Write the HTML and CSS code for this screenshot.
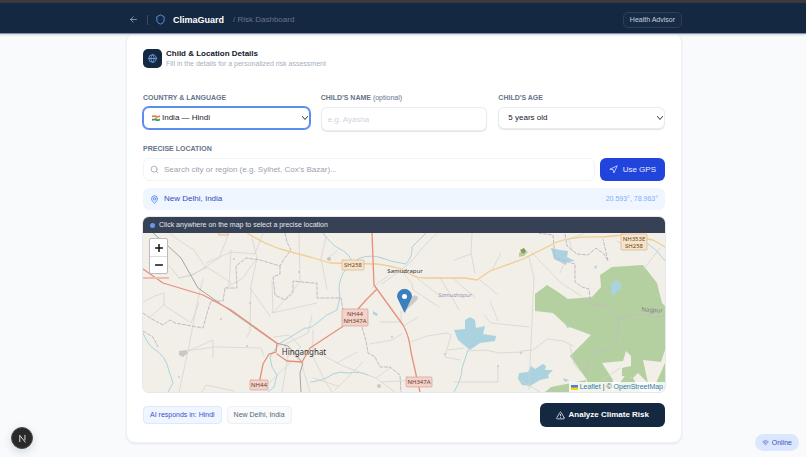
FILE: index.html
```html
<!doctype html>
<html lang="en">
<head>
  <meta charset="utf-8">
  <title>ClimaGuard - Risk Dashboard</title>
  <link rel="stylesheet" href="styles.css">
</head>
<body>
<header class="topbar">
  <a class="back" href="#" aria-label="Back"><svg viewBox="0 0 24 24"><path d="M20 12H4M11 5l-7 7 7 7"/></svg></a>
  <span class="divider"></span>
  <svg class="shield" viewBox="0 0 24 24"><path d="M20 13c0 5-3.500 7.500-7.700 8.900a1 1 0 0 1-.6 0C7.500 20.500 4 18 4 13V6a1 1 0 0 1 1-1c2 0 4.500-1.200 6.200-2.700a1.200 1.200 0 0 1 1.600 0C14.500 3.800 17 5 19 5a1 1 0 0 1 1 1z"/></svg>
  <strong class="brand">ClimaGuard</strong>
  <span class="crumb">/ Risk Dashboard</span>
  <button class="advisor" type="button">Health Advisor</button>
</header>

<main class="page">
  <form class="card">
    <div class="heading">
      <span class="heading-icon"><svg viewBox="0 0 24 24"><circle cx="12" cy="12" r="10"/><path d="M2 12h20M12 2c-5.500 5.500-5.500 14.500 0 20M12 2c5.500 5.500 5.500 14.500 0 20"/></svg></span>
      <div>
        <h1>Child &amp; Location Details</h1>
        <p>Fill in the details for a personalized risk assessment</p>
      </div>
    </div>

    <div class="fields">
      <div class="field">
        <label for="country">COUNTRY &amp; LANGUAGE</label>
        <div class="select-box">
          <select id="country" class="control with-flag focused"><option>India — Hindi</option></select>
          <svg class="flag" viewBox="0 0 8 6"><path fill="#e8804a" d="M0 .6q2-.8 4 0t4-.3v2q-2 .9-4 .2t-4 .1z"/><path fill="#f3f1ea" d="M0 2.400q2-.6 4 0t4-.3v1.600q-2 .9-4 .2t-4 .1z"/><path fill="#3c9659" d="M0 4q2-.6 4 0t4-.3v1.800q-2 .9-4 .2t-4 .1z"/><circle cx="4" cy="3.200" r=".7" fill="#53629c"/></svg>
          <svg class="chevron" viewBox="0 0 8 8"><path d="M1.500 2.500L4 5.500l2.500-3"/></svg>
        </div>
      </div>
      <div class="field">
        <label for="name">CHILD'S NAME <span>(optional)</span></label>
        <input id="name" class="control name" type="text" placeholder="e.g. Ayasha">
      </div>
      <div class="field">
        <label for="age">CHILD'S AGE</label>
        <div class="select-box">
          <select id="age" class="control"><option>5 years old</option></select>
          <svg class="chevron" viewBox="0 0 8 8"><path d="M1.500 2.500L4 5.500l2.500-3"/></svg>
        </div>
      </div>
    </div>

    <div class="field location">
      <label for="search">PRECISE LOCATION</label>
      <div class="search-row">
        <div class="search">
          <svg viewBox="0 0 24 24"><circle cx="11" cy="11" r="8"/><path d="M21 21l-4.300-4.300"/></svg>
          <input id="search" type="text" placeholder="Search city or region (e.g. Sylhet, Cox's Bazar)...">
        </div>
        <button class="gps" type="button"><svg viewBox="0 0 24 24"><path d="M3 11l19-9-9 19-2-8z"/></svg>Use GPS</button>
      </div>
    </div>

    <div class="place">
      <svg viewBox="0 0 24 24"><path d="M20 10c0 5-5.500 10.200-7.400 11.800a1 1 0 0 1-1.200 0C9.500 20.200 4 15 4 10a8 8 0 0 1 16 0"/><circle cx="12" cy="10" r="3"/></svg>
      <span>New Delhi, India</span>
      <span class="coords">20.593°, 78.963°</span>
    </div>

    <div class="map">
      <div class="map-bar"><i></i>Click anywhere on the map to select a precise location</div>
      <div class="map-view">
        <svg class="tiles" viewBox="143 233 522 159" preserveAspectRatio="xMidYMid slice">
          <rect x="143" y="233" width="522" height="159" fill="#f2efe9"/>
          <!-- forest -->
          <g fill="#b5d0a0">
            <path d="M535 311V294L547 285 558 292 568 299 592 297 601 287 600 275 612 267 643 265 657 283 662 303 665 306V350L661 362 643 360 648 383 638 373 633 378 622 376 622 368 631 366 631 356 626 351 623 361 602 363 613 380 613 392H586L587 380 570 356 591 335 567 326 553 313z"/>
            <path d="M545 392l6-5 15-3 20-4v12zM665 363l-9 20 9 9zM613 392l12-16 8 2 8 14z"/>
            <path d="M519 253l5-4 4 3-4 4-5 1z"/>
          </g>
          <!-- lakes -->
          <g fill="#aad3df">
            <path d="M470 317l5 3 1 8 9-2-2 8 13 2-1 5-15 2-10 7-12-10-4-10 11-1v-9z"/>
            <path d="M519 373l9-1 3-6 4 3 8-5 3 2-1 4 8 0-5 5 1 3-9 2-10 6-8-1-4-6z"/>
            <path d="M551 248l9 2 8 1-1 6 8 4-8 1-1 3-8-4-4-2z"/>
            <path d="M611 284l5-4 5 3v6l-5 3-2 4-3-3zM594 267l3-2-1 4zM373 311l5 3-1 2-4-2zM566 325l5 2-4 1zM563 378l6 2-4 2zM655 294h2v2z"/>
          </g>
          <!-- rivers -->
          <g class="river">
            <path d="M323 233q9 12 15 15 13 6 14 15l-9 10q-6 13-3 23l-3 14q-11 4-20 13-7 6-12 5-13 8-26 16l-9 13 2 10 5 8-3 12-6 5"/>
            <path d="M426 233q-7 7-14 14 1 9-6 17-15-2-27-7-15-3-24 4M143 333q5 12 11 16 12 7 15 22l4 12-5 9M311 382q12-1 22-8 7-3 15-1 12-2 20 2M454 392q8-13 8-24l6-18M648 244l9 7 8 10"/>
          </g>
          <!-- minor roads -->
          <g class="minor">
            <path d="M169 233l8 6 17 11 12 18-15 7-12 3-6-8-8-8-10-7M179 278l14-3 26-17 10-25M206 267l12 7 13 9M206 263l25-11 24 2 8-21M203 279l-5 20-10 52-9 41M231 250l-2 35M252 238l3 12 2 8-6 28-1 45M257 258l-14 20-18 10M143 302l12-6 9-3v12l-14 12M164 305l27 18 8-20M183 353l30-13v18M185 351l30-4 46 1 3 8M250 288l20 28M299 233l1 49-27 31-1-31M272 313l45-10M250 331l-3 6M202 392l4-7 28 6M312 315l-4 18-24 12 17 17 9 30M274 337l15-2 12 12-12 9M288 356l-6 36M291 362l-25 24M311 353l12 24 9 15"/>
            <path d="M326 237l-5 22 6 30M327 259l10-8M378 257l5 2M382 284l29-22 12-15 14-14M372 288l17-13M400 268l12 16 1 6 14 9 12 8M417 278l14 11 10 8M440 278l10 16 9 16M453 278l12 11 10 8M472 233l-1 20 4 20M454 260l17-6M480 280l17 14M492 270l9-17M401 311v11M400 322h-20M405 325l13-8M402 334l-10 6-22 4M411 342l16-6 20-3 4 2-6 22 15 3M467 351l18-1 15 3M313 330v20l30 16 33 12 27 20M337 363l20-11M335 390l28-28M376 378l14-10M448 350l16-2M484 315l7 8 20 2 18 2M529 257l5 20-5 112M490 301l8 20M500 353l23-1M498 366v16h-44M418 380l-36 2M531 252l14 14 15 16 21 14M560 273l5-11M521 351l12-1 14-11 16 2 10 5M570 346l4 18 6 7M583 234l-14 5 3 12M640 238l-15 8-8-5M660 248l-17 22M602 380l18-12M520 380l20 12M313 378l25 8"/>
          </g>
          <g fill="#cbc7c2"><path d="M179 351l7-1 2 3-5 4-4-2z"/><circle cx="234" cy="259" r="1"/><circle cx="299" cy="272" r="1"/><circle cx="250" cy="303" r="1"/><circle cx="247" cy="346" r="1"/><circle cx="221" cy="319" r="1"/><circle cx="179" cy="377" r="1"/><circle cx="329" cy="259" r="2"/><circle cx="392" cy="337" r="1"/><circle cx="445" cy="354" r="1"/><circle cx="498" cy="366" r="1"/><circle cx="521" cy="353" r="1"/><circle cx="379" cy="386" r="2"/></g>
          <!-- district borders -->
          <g class="border">
            <path d="M143 313l7 5 13 7 7-5 5 3 28 5 5-18 3-9h12l2-13h12l-1-22 10-8 14 2 20 6 4-7 7-9-4-8-2-9M280 266v8l-7 3 2 18 10 5 8-7v-12l20 2h4v15h24l2 13M143 331l10 6 5 10"/>
            <path d="M362 327l4 14 2 12 7 4 5 10h10l10 8 1 17M538 233l15 2 2 23 20 6v18l7 5 7 2 2 17 10-2 10 5 7 8 1 12-4 15-7 6-10 2-10 10-3 14M618 319l22-5 13 3 12-1M565 234l2 12 10 8 11 1 8-7 8 6 4 7-5-22"/>
          </g>
          <!-- railway -->
          <path class="rail" d="M153 233l14 12 14 13 17 30 78 55 12 3 15 17-3 10 1 19"/>
          <!-- highways -->
          <path class="yellow" d="M247 233q16 10 33 16l30 8 20 6 47 1q16 2 26 6 12 8 20 8h42l12 2 13-9 33-12 34-17q16-6 46-5l20-2 30 5 12 7"/>
          <path class="red" d="M143 269l20 14 40 12 28 15 43 31 3 2-1 9-7 2-6 10-4 20M277 354l10 7 15 1 8-14 32-21 24-27 11-11M372 233l2 52 29 40q6 10 8 27l6 27 3 13"/>
          <path fill="#edbeb4" d="M143 277h26v2h-26z"/>
          <path fill="#70a35d" d="M520 250l4-2 2 3-3 3z"/><path fill="#b98555" d="M521 252l3-3 1 4z"/>
          <!-- road shields -->
          <g class="shield-y"><rect x="342" y="260" width="22" height="10" rx="1"/><rect x="621" y="234" width="26" height="16" rx="1"/><rect x="219" y="229" width="9" height="6"/></g>
          <g class="shield-r"><rect x="342" y="309" width="26" height="17" rx="1"/><rect x="406" y="377" width="26" height="10" rx="1"/><rect x="250" y="380" width="18" height="10" rx="1"/></g>
          <g class="road-no">
            <text x="353" y="267">SH258</text><text x="634" y="241">NH353E</text><text x="634" y="248">SH258</text>
            <text x="355" y="316">NH44</text><text x="355" y="323">NH347A</text><text x="419" y="384">NH347A</text><text x="259" y="387">NH44</text>
          </g>
          <text class="town" x="405" y="273">Samudrapur</text>
          <text class="city" x="304" y="355">Hinganghat</text>
          <text class="region" x="455" y="297">Samudrapur</text>
          <text class="district" x="652" y="312" transform="rotate(4 652 312)">Nagpur</text>
          <!-- marker -->
          <path d="M405 311l9-8q6-5 3-7-4-2-9 4z" fill="#777" opacity=".3"/>
          <path d="M404.500 312l-5.500-11.500q-1.500-2.500-1.500-4.500a7 6.700 0 0 1 14 0q0 2-1.500 4.500z" fill="#3a80c1" stroke="#2f6da6" stroke-width=".7"/>
          <circle cx="404.500" cy="296.500" r="2.500" fill="#fff"/>
        </svg>
        <div class="zoom"><button type="button" aria-label="Zoom in"><svg viewBox="0 0 8 8"><path d="M4 .5v7M.5 4h7"/></svg></button><button type="button" aria-label="Zoom out"><svg viewBox="0 0 8 8"><path d="M.5 4h7"/></svg></button></div>
        <div class="credit"><svg viewBox="0 0 7 5"><path fill="#4c7be1" d="M0 0h7v3H0z"/><path fill="#ffd500" d="M0 2.500h7V5H0z"/></svg> <a href="#">Leaflet</a> | © <a href="#">OpenStreetMap</a></div>
      </div>
    </div>

    <div class="actions">
      <span class="chip chip-blue">AI responds in: Hindi</span>
      <span class="chip">New Delhi, India</span>
      <button class="analyze" type="button"><svg viewBox="0 0 24 24"><path d="M21.700 18l-8-14a2 2 0 0 0-3.400 0l-8 14A2 2 0 0 0 4 21h16a2 2 0 0 0 1.700-3M12 9v4M12 17v.2"/></svg>Analyze Climate Risk</button>
    </div>
  </form>
</main>

<button class="dev" type="button" aria-label="Dev tools"><svg viewBox="0 0 10 10"><path d="M2 8.500V1.500L8 9M7.700 1.500v5"/></svg></button>
<div class="online"><svg viewBox="0 0 24 24"><path d="M2 9a15 15 0 0 1 20 0M5 13a10 10 0 0 1 14 0M8.500 16.500a5 5 0 0 1 7 0M12 20v.2"/></svg>Online</div>
</body>
</html>
```
FILE: styles.css
```css
*{box-sizing:border-box;margin:0;padding:0;}
body{min-height:100vh;background:#f8fafc;font-family:"Liberation Sans",Arial,sans-serif;font-size:8px;line-height:10px;color:#172033;}
button,input,select{font:inherit;color:inherit;}
button{cursor:pointer;}
svg{display:block;flex:none;fill:none;stroke-width:2;stroke-linecap:round;stroke-linejoin:round;}
a{text-decoration:none;}

.topbar{display:flex;align-items:center;height:34px;padding:3px 124px 0 129px;background:#152841;border-top:3px solid #3b393d;border-bottom:1px solid #8390a3;box-shadow:0 1px 2px #cbd5e1;position:relative;z-index:1;}
.back svg{width:9px;height:9px;stroke:#a3b1c5;}
.divider{width:1px;height:10px;margin:0 7px 0 9px;background:#3a4b63;}
.shield{width:11px;height:11px;stroke:#609bf0;}
.brand{margin-left:7px;font-size:9px;color:#fff;}
.crumb{margin-left:9px;color:#66758c;}
.advisor{margin-left:auto;height:16px;padding:0 6px;border:1px solid #2d405a;border-radius:5px;background:#182b45;color:#c5d0df;font-size:7px;}

.page{padding:0 125px 15px 127px;}
.card{padding:15px 16px;background:#fff;border-radius:8px;box-shadow:0 0 0 1px #eef1f5,0 1px 3px #cfd5dd;}

.heading{display:flex;align-items:center;gap:4px;}
.heading-icon{display:grid;place-items:center;width:19px;height:19px;border-radius:5px;background:#152841;}
.heading-icon svg{width:9px;height:9px;stroke:#7fb2f4;}
.heading h1{font-size:8px;line-height:10px;color:#0f172a;}
.heading p{font-size:7px;line-height:9px;color:#a5b0c0;}

.fields{display:grid;grid-template-columns:repeat(3,1fr);gap:11px;margin-top:26px;}
.field label{display:block;margin-bottom:5px;font-size:7px;line-height:8px;font-weight:bold;color:#66748b;}
.field label span{font-weight:normal;}
.select-box{position:relative;}
.control{display:block;width:100%;height:22px;padding:0 9px;border:1px solid #e8ecf1;border-radius:6px;background:#fff;box-shadow:0 1px 1px #e2e5e9;outline:none;appearance:none;}
.with-flag{padding-left:18px;}
.focused{border-color:#5b8def;box-shadow:0 0 0 1px #5b8def;}
.name{height:24px;padding:0 6px;}
.control::placeholder{color:#cfd5de;}
.flag{position:absolute;left:9px;top:8px;width:8px;height:6px;}
.chevron{position:absolute;right:1px;top:7px;width:8px;height:8px;stroke:#30343b;stroke-width:1;pointer-events:none;}

.location{margin-top:14px;}
.search-row{display:flex;gap:5px;}
.search{display:flex;flex:1;align-items:center;gap:5px;height:23px;padding:0 6px;border:1px solid #f1f4f7;border-radius:6px;}
.search svg{width:9px;height:9px;stroke:#929cac;}
.search input{flex:1;min-width:0;border:0;outline:none;background:none;}
.search input::placeholder{color:#9aa3b0;}
.gps{display:flex;align-items:center;gap:5px;height:23px;padding:0 9px;border:0;border-radius:6px;background:#2145dc;color:#e7edff;}
.gps svg{width:9px;height:9px;stroke:#e7edff;}

.place{display:flex;align-items:center;gap:5px;height:22px;margin-top:7px;padding:0 7px;border-radius:6px;background:#eff6ff;color:#334dbc;}
.place svg{width:9px;height:9px;fill:#dbe8ff;stroke:#4c80ec;}
.coords{margin-left:auto;font-size:7px;color:#83adf5;}

.map{margin-top:7px;border-radius:6px;overflow:hidden;box-shadow:0 0 0 1px #e5e8ec;}
.map-bar{display:flex;align-items:center;gap:4px;height:16px;padding:0 7px;background:#374155;color:#e2e7ee;font-size:7px;}
.map-bar i{width:5px;height:5px;border-radius:50%;background:#6698ef;}
.map-view{position:relative;height:159px;}
.tiles{width:100%;height:100%;stroke-width:1;}
.river{stroke:#aad3df;stroke-width:1;}
.minor{stroke:#d3d1ce;stroke-width:.7;}
.border{stroke:#c3b9c4;stroke-width:1;stroke-dasharray:4 1;stroke-linecap:butt;}
.rail{stroke:#93918d;stroke-width:.8;}
.yellow{stroke:#f2cd90;stroke-width:1.300;}
.red{stroke:#e98f79;stroke-width:1.300;}
.shield-y{fill:#f7e4c8;stroke:#d5b48b;stroke-width:.7;}
.shield-r{fill:#f3d2ca;stroke:#d8a198;stroke-width:.7;}
.tiles text{font-family:"Noto Sans",sans-serif;text-anchor:middle;}
.road-no{font-size:6px;fill:#68442f;}
.town{font-size:6px;fill:#333;}
.city{font-size:8px;fill:#333;}
.region{font-size:6px;font-style:italic;fill:#a594b3;}
.district{font-size:6px;fill:#887591;}
.zoom{position:absolute;left:6px;top:5px;border:1px solid #bbb;border-radius:2px;background:#fff;}
.zoom button{display:grid;place-items:center;width:17px;height:17px;border:0;background:none;}
.zoom button + button{border-top:1px solid #ddd;}
.zoom svg{width:8px;height:8px;stroke:#111;stroke-width:1.500;}
.credit{position:absolute;right:0;bottom:0;display:flex;align-items:center;gap:2px;padding:0 2px;background:rgba(255,255,255,.8);font-size:7px;color:#444;}
.credit svg{width:7px;height:5px;}
.credit a{color:#3279a8;}

.actions{display:flex;align-items:center;gap:5px;margin-top:11px;}
.chip{padding:3px 6px;border:1px solid #edf0f4;border-radius:4px;background:#f8fafc;color:#596579;font-size:7px;}
.chip-blue{border-color:#dbe8fe;background:#eff6ff;color:#3b50cc;}
.analyze{display:flex;align-items:center;gap:4px;height:24px;margin-left:auto;padding:0 16px;border:0;border-radius:6px;background:#152841;color:#fff;font-weight:bold;}
.analyze svg{width:9px;height:9px;stroke:#fff;}

.dev{position:fixed;left:11px;bottom:8px;display:grid;place-items:center;width:22px;height:22px;border:1px solid #4b4b4b;border-radius:50%;background:#292929;box-shadow:0 3px 8px #d4d8dd;}
.dev svg{width:9px;height:9px;stroke:#eee;stroke-width:1;}
.online{position:fixed;right:7px;bottom:6px;display:flex;align-items:center;gap:3px;height:17px;padding:0 7px;border-radius:9px;background:#dbe7fe;color:#4352c4;font-size:7px;}
.online svg{width:7px;height:7px;stroke:#4352c4;}
```
